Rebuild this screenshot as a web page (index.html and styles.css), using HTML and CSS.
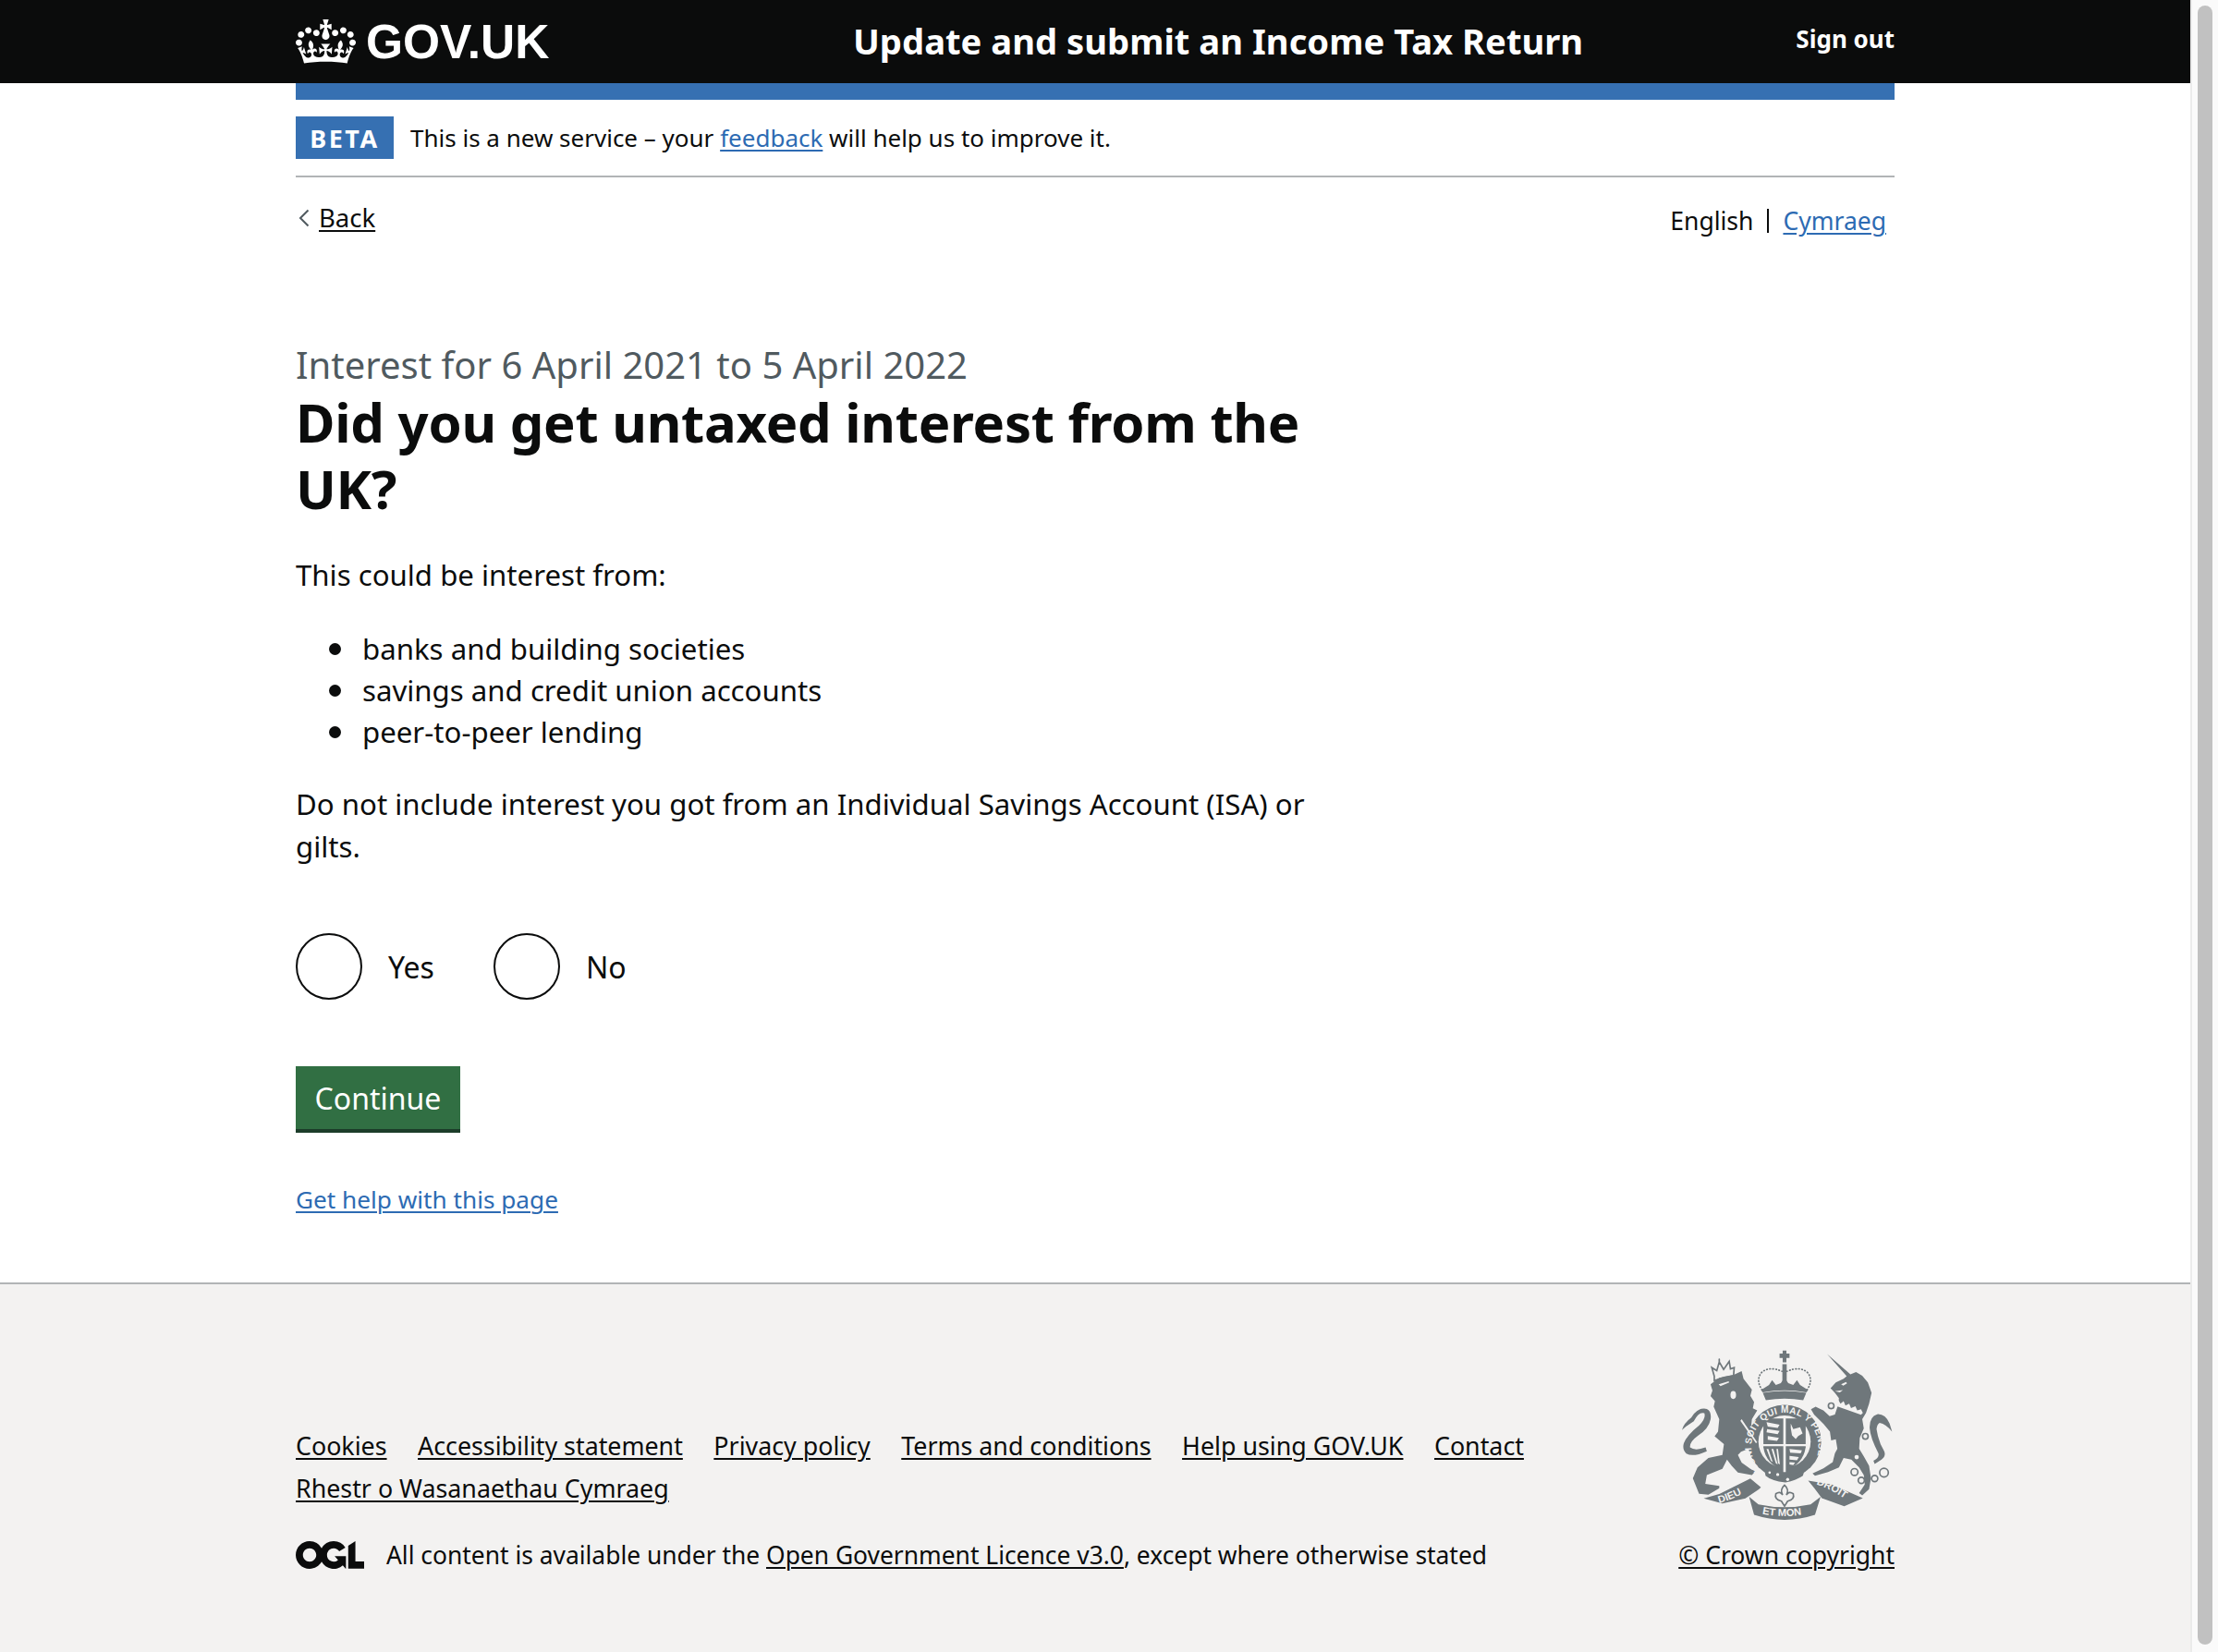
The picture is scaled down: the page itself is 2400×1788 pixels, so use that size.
FILE: index.html
```html
<!DOCTYPE html>
<html lang="en">
	<head>
		<title>Did you get untaxed interest from the UK?</title>
		<meta charset="UTF-8" />
		<link rel="stylesheet" href="styles.css">
	</head>
	<body>
		<div class="page">
			<header class="header">
				<div class="container headerInner">
					<a class="logo" href="#">
						<svg class="crown" viewBox="0 0 132 97" aria-hidden="true"><path fill="currentColor" fill-rule="evenodd" d="M25 30.2c3.5 1.5 7.7-.2 9.1-3.7 1.5-3.6-.2-7.8-3.9-9.2-3.6-1.4-7.6.3-9.1 3.9-1.4 3.5.3 7.5 3.9 9zM9 39.5c3.6 1.5 7.8-.2 9.2-3.7 1.5-3.6-.2-7.8-3.9-9.1-3.6-1.5-7.6.2-9.1 3.8-1.4 3.5.3 7.5 3.8 9zM4.4 57.2c3.5 1.5 7.7-.2 9.1-3.8 1.5-3.6-.2-7.7-3.9-9.1-3.5-1.5-7.6.3-9.1 3.8-1.4 3.5.3 7.6 3.9 9.1zm38.3-21.4c3.5 1.5 7.7-.2 9.1-3.8 1.5-3.6-.2-7.7-3.9-9.1-3.6-1.5-7.6.3-9.1 3.8-1.3 3.6.4 7.7 3.9 9.1zm64.4-5.6c-3.6 1.5-7.8-.2-9.1-3.7-1.5-3.6.2-7.8 3.8-9.2 3.6-1.4 7.7.3 9.2 3.9 1.3 3.5-.4 7.5-3.9 9zm15.9 9.3c-3.6 1.5-7.7-.2-9.1-3.7-1.5-3.6.2-7.8 3.7-9.1 3.6-1.5 7.7.2 9.2 3.8 1.5 3.5-.3 7.5-3.8 9zm4.7 17.7c-3.6 1.5-7.8-.2-9.2-3.8-1.5-3.6.2-7.7 3.9-9.1 3.6-1.5 7.7.3 9.2 3.8 1.3 3.5-.4 7.6-3.9 9.1zM89.3 35.8c-3.6 1.5-7.8-.2-9.2-3.8-1.4-3.6.2-7.7 3.9-9.1 3.6-1.5 7.7.3 9.2 3.8 1.4 3.6-.3 7.7-3.9 9.1zM69.7 17.7l8.9 4.7V9.3l-8.9 2.8c-.2-.3-.5-.6-.9-.9L72.4 0H59.6l3.5 11.2c-.3.3-.6.5-.9.9l-8.8-2.8v13.1l8.8-4.7c.3.3.6.7.9.9l-5 15.4v.1c-.2.8-.4 1.6-.4 2.4 0 4.1 3.1 7.5 7 8.1h.2c.3 0 .7.1 1 .1.4 0 .7 0 1-.1h.2c4-.6 7.1-4.1 7.1-8.1 0-.8-.1-1.7-.4-2.4V34l-5.1-15.4c.4-.2.7-.6 1-.9zM66 92.8c16.9 0 32.8 1.1 47.1 3.2 4-16.9 8.9-26.7 14-33.5l-9.6-3.4c1 4.9 1.1 7.2 0 10.2-1.5-1.4-3-4.3-4.2-8.7L108.6 76c2.8-2 5-3.2 7.5-3.3-4.4 9.4-10 11.9-13.6 11.2-4.3-.8-6.3-4.6-5.6-7.9 1-4.7 5.7-5.9 8-.5 4.3-8.7-3-11.4-7.6-8.8 7.1-7.2 7.9-13.5 2.1-21.1-8 6.1-8.1 12.3-4.5 20.8-4.7-5.4-12.1-2.5-9.5 6.2 3.4-5.2 7.9-2 7.2 3.1-.6 4.3-6.4 7.8-13.5 7.2-10.3-.9-10.9-8-11.2-13.8 2.5-.5 7.1 1.8 11 7.3L80.2 60c-4.1 4.4-8 5.3-12.3 5.4 1.4-4.4 8-11.6 8-11.6H55.5s6.4 7.2 7.9 11.6c-4.2-.1-8-1-12.3-5.4l1.4 16.4c3.9-5.5 8.5-7.7 10.9-7.3-.3 5.8-.9 12.8-11.1 13.8-7.2.6-12.9-2.9-13.5-7.2-.7-5 3.8-8.3 7.1-3.1 2.7-8.7-4.6-11.6-9.4-6.2 3.7-8.5 3.6-14.7-4.6-20.8-5.8 7.6-5 13.9 2.2 21.1-4.7-2.6-11.9.1-7.7 8.8 2.3-5.5 7.1-4.2 8.1.5.7 3.3-1.3 7.1-5.7 7.9-3.5.7-9-1.8-13.5-11.2 2.5.1 4.7 1.3 7.5 3.3l-4.7-15.4c-1.2 4.4-2.7 7.2-4.3 8.7-1.1-3-.9-5.3 0-10.2l-9.5 3.4c5 6.9 9.9 16.7 14 33.5 14.8-2.1 30.8-3.2 47.7-3.2z"/></svg>
						<span class="logoText">GOV.UK</span>
					</a>
					<a class="serviceName" href="#">Update and submit an Income Tax Return</a>
					<a class="signOut" href="#">Sign out</a>
				</div>
			</header>
			<div class="container">
				<div class="blueBar"></div>
				<div class="phase">
					<strong class="phaseTag">BETA</strong>
					<span>This is a new service – your <a class="link" href="#">feedback</a> will help us to improve it.</span>
				</div>
				<div class="subNav">
					<a class="back" href="#"><svg class="chevron" viewBox="0 0 12 20" aria-hidden="true"><path d="M10.5 1.5 2 10l8.5 8.5" fill="none" stroke="#505a5f" stroke-width="2"/></svg><span>Back</span></a>
					<div class="language">
						<span>English</span><span class="langBar"></span><a class="link" href="#">Cymraeg</a>
					</div>
				</div>
				<main class="main">
					<span class="caption">Interest for 6 April 2021 to 5 April 2022</span>
					<h1 class="heading">Did you get untaxed interest from the UK?</h1>
					<p class="para">This could be interest from:</p>
					<ul class="bullets">
						<li>banks and building societies</li>
						<li>savings and credit union accounts</li>
						<li>peer-to-peer lending</li>
					</ul>
					<p class="para">Do not include interest you got from an Individual Savings Account (ISA) or gilts.</p>
					<div class="radios">
						<label class="radio"><span class="radioCircle"></span>Yes</label>
						<label class="radio"><span class="radioCircle"></span>No</label>
					</div>
					<button class="button" type="button">Continue</button>
					<a class="link helpLink" href="#">Get help with this page</a>
				</main>
			</div>
			<footer class="footer">
				<div class="container footerInner">
					<div class="footerLeft">
						<ul class="footerLinks">
							<li><a href="#">Cookies</a></li>
							<li><a href="#">Accessibility statement</a></li>
							<li><a href="#">Privacy policy</a></li>
							<li><a href="#">Terms and conditions</a></li>
							<li><a href="#">Help using GOV.UK</a></li>
							<li><a href="#">Contact</a></li>
							<li><a href="#">Rhestr o Wasanaethau Cymraeg</a></li>
						</ul>
						<div class="licence">
							<svg class="ogl" viewBox="0 0 483.2 195.7" aria-hidden="true"><path fill="currentColor" d="M421.5 142.8V.1l-50.7 32.3v161.1h112.4v-50.7zm-122.3-9.6A47.12 47.12 0 0 1 221 97.8c0-26 21.1-47.1 47.1-47.1 16.7 0 31.4 8.7 39.7 21.8l42.7-27.2A97.63 97.63 0 0 0 268.1 0c-36.5 0-68.3 20.1-85.1 49.7A98 98 0 0 0 97.8 0C43.9 0 0 43.9 0 97.8s43.9 97.8 97.8 97.8c36.5 0 68.3-20.1 85.1-49.7a97.76 97.76 0 0 0 149.6 25.4l19.4 22.2h3v-87.8h-80l24.3 27.5zM97.8 145c-26 0-47.1-21.1-47.1-47.1s21.1-47.1 47.1-47.1 47.2 21 47.2 47S123.8 145 97.8 145"/></svg>
							<span>All content is available under the <a href="#">Open Government Licence v3.0</a>, except where otherwise stated</span>
						</div>
					</div>
					<div class="copyright">
						<svg class="crest" viewBox="118 64 682 556" aria-hidden="true">
							<defs>
								<path id="garterPath" d="M372 452A108 108 0 1 1 530 452" fill="none"/>
								<path id="dieuPath" d="M240 560Q295 545 352 507" fill="none"/>
								<path id="monPath" d="M366 592Q450 612 534 592" fill="none"/>
								<path id="droitPath" d="M552 500Q610 518 668 564" fill="none"/>
							</defs>
							<g class="crestFill">
								<!-- royal crown -->
								<path d="M444 69h12v10h10v-6h0v26h0v-6h-10v14h-12V93h-10v6h0V73h0v6h10z"/>
								<path d="M443 113h14v62h-14z"/>
								<path d="M380 204l-6-8 26-16 10-16 12 16 16-6 12-18 12 18 16 6 12-16 10 16 26 16-6 8q-70-14-140 0z"/>
								<path d="M380 205q70-12 140 0l-10 24q-60-10-120 0z"/>
								<path class="crestCut" d="M388 232q62-10 124 0l-6 16q-56-8-112 0z"/>
								<!-- lion -->
								<path d="M212 178L240 157L285 148L312 135L318 160L345 195L340 215L352 235L348 255L362 262L345 290L340 340L362 372L355 388L335 385L310 395L300 405L312 430L340 450L356 458L345 470L300 462L280 440L265 420L250 450L200 470L195 498L240 505L240 512L205 533L175 530L155 480L170 445L205 415L250 405L255 370L225 345L236 330L240 290L222 250L226 232L212 216L218 198z"/>
								<path d="M120 325q6-22 30-40 20-34 50-28 16 8 12 34-6 30-40 52-28 20-26 38 16 12 50 0l4 12q-44 20-66 8-14-14-8-34 10-26 50-58 22-22 16-38-18-6-34 26l-10 6q-14 8-28 22z"/>
								<!-- unicorn -->
								<path d="M587 80L662 146L680 138L700 150L718 172L730 205L722 240L712 270L700 290L705 320L692 350L690 385L705 410L722 440L728 480L722 515L700 535L690 528L708 500L705 470L690 445L665 420L640 415L625 445L590 460L548 472L540 465L575 448L605 428L612 400L620 385L615 355L600 358L596 330L575 305L545 275L535 258L550 250L575 262L595 280L612 275L622 245L625 222L612 205L598 190L615 172L640 160L650 152z"/>
								<path d="M796 330q-20-24-40-28-8 4-10 20 6 40 24 70 8 16-8 28l-22 14-4-10q20-10 16-24-26-50-28-80-2-38 24-46 26-2 40 30z"/>
								<!-- garter -->
								<circle cx="450" cy="362" r="118"/>
								<circle class="crestCut" cx="450" cy="362" r="84"/>
								<path d="M382 288h136v92q-8 56-68 76-60-20-68-76z"/>
								<path class="crestCut" d="M446 284h8v176h-8zM370 370h160v7H370z"/>
								<path class="crestCut" d="M392 300l42 8-6 10-32-4zM394 322l40 6-6 10-36-6zM396 344l36 6-6 10-30-4zM470 304l8 18 22-6 8 20-14 8-8 10-12-12-4-24z"/>
								<path class="crestCut" d="M392 386l6 0 14 42-6-4zM408 386l6 0 14 50-6-4zM424 386l5 0 6 50-6-4z"/>
								<path class="crestCut" d="M466 386l40 4-4 10-34-2zM466 408l30 4-6 10-24-2zM466 428l18 2-6 8-12-2z"/>
								<path d="M385 452q65 36 130 0l-6 20q-20 14-56 22-46-6-64-22z"/>
								<circle class="crestCut" cx="428" cy="468" r="5"/>
								<circle class="crestCut" cx="460" cy="484" r="5"/>
								<circle class="crestCut" cx="402" cy="462" r="4"/>
							</g>
							<g class="crestLine">
								<!-- crown arches -->
								<path stroke-dasharray="2 8" d="M378 196q-22-32-2-56 24-22 66-4M522 196q22-32 2-56-24-22-66-4"/>
								<!-- lion's crown -->
								<path d="M224 152l-8-28 16 10 8-28 14 24 18-26 4 24 12-4-2 26q-32 4-62 16zM240 97v8"/>
								<!-- unicorn's chain -->
								<circle cx="600" cy="247" r="9"/>
								<circle cx="710" cy="345" r="9"/>
								<circle cx="675" cy="460" r="11"/>
								<circle cx="697" cy="487" r="10"/>
								<circle cx="740" cy="481" r="10"/>
								<circle cx="770" cy="462" r="14"/>
								<!-- fleur de lis -->
								<path d="M450 502q16 14 6 32 8-14 22-4 6 18-18 24l-10 16-10-16q-24-6-18-24 14-10 22 4-10-18 6-32z"/>
							</g>
							<g class="crestCuts">
								<!-- collar, claw stripe, faces and spots -->
								<path d="M622 226l8 14 10-8 6 14 12-6 6 14 14-6 6 14 12-4 6 12-6 6-84-30z"/>
								<path d="M312 290l50 74-4 3-50-72z"/>
								<circle cx="682" cy="412" r="7"/>
								<circle cx="702" cy="384" r="7"/>
								<path d="M238 178L270 168L272 172L244 184z"/>
								<ellipse cx="285" cy="212" rx="9" ry="13"/>
								<path d="M632 178l16-8 3 5-12 7z"/>
								<path d="M612 200l26-4-10 8z"/>
							</g>
							<g class="crestFill">
								<path d="M190 545l50-14 100-50 34 28-6 6-44 30-74 16z"/>
								<path d="M336 540l30 24q84 18 168 0l32-24-18 58q-98 32-196 0z"/>
								<path d="M526 488l76 12 100 44-60 26-72-26-24-32z"/>
							</g>
							<g class="crestText">
								<text font-size="30" letter-spacing="1"><textPath href="#garterPath">HONI SOIT QUI MAL Y PENSE</textPath></text>
								<text font-size="33"><textPath href="#dieuPath">DIEU</textPath></text>
								<text font-size="33"><textPath href="#monPath" startOffset="12">ET MON</textPath></text>
								<text font-size="33"><textPath href="#droitPath">DROIT</textPath></text>
							</g>
						</svg>
						<a href="#">© Crown copyright</a>
					</div>
				</div>
			</footer>
		</div>
		<div class="scrollbar"><div class="scrollThumb"></div></div>
	</body>
</html>
```
FILE: styles.css
```css
html, body {
	margin: 0px;
	padding: 0px;
	height: 1788px;
	overflow: hidden;
}
body {
	display: flex;
	font-family: "Noto Sans", Arial, sans-serif;
	font-size: 31.2px;
	line-height: 45px;
	color: #0b0c0c;
	background: #ffffff;
}
.page {
	flex: 1;
	display: flex;
	flex-direction: column;
	min-width: 0;
}
.scrollbar {
	width: 16px;
	border-left: 2px solid #ebebeb;
	background: #fafafa;
	padding: 6px 6px 8px 6px;
}
.scrollThumb {
	height: 100%;
	border-radius: 8px;
	background: #c1c1c1;
}
.container {
	width: 1730px;
	margin: 0 auto;
}
a {
	color: inherit;
	text-decoration-thickness: 2px;
	text-underline-offset: 3px;
}
.link {
	color: #2d6bb3;
}

/* header */
.header {
	height: 90px;
	background: #0b0c0c;
	color: #ffffff;
}
.headerInner {
	display: flex;
	align-items: center;
	height: 100%;
}
.header a {
	text-decoration: none;
}
.logo {
	display: flex;
	align-items: center;
	width: 603px;
}
.crown {
	width: 65px;
	height: 48px;
	margin-right: 11px;
}
.logoText {
	font-family: "Liberation Sans", Arial, sans-serif;
	font-weight: 700;
	font-size: 51.5px;
	line-height: 60px;
}
.serviceName {
	font-weight: 700;
	font-size: 38.2px;
	line-height: 50px;
	margin-top: -2px;
}
.signOut {
	margin-left: auto;
	font-weight: 700;
	font-size: 26px;
	margin-top: -6px;
}

/* beta banner */
.blueBar {
	height: 18px;
	background: #3670b2;
}
.phase {
	display: flex;
	align-items: center;
	height: 82px;
	border-bottom: 2px solid #b1b4b6;
	font-size: 26px;
	line-height: 40px;
}
.phaseTag {
	width: 106px;
	height: 46px;
	margin-right: 18px;
	background: #3670b2;
	color: #ffffff;
	font-weight: 700;
	font-size: 27px;
	line-height: 48px;
	letter-spacing: 2.5px;
	text-align: center;
}
.subNav {
	display: flex;
	justify-content: space-between;
	font-size: 26.5px;
	line-height: 40px;
	padding-top: 24px;
}
.back {
	display: flex;
	align-items: center;
	height: 40px;
	font-size: 27.5px;
}
.chevron {
	width: 12px;
	height: 20px;
	margin: 0 10px 0 3px;
}
.language {
	display: flex;
	align-items: center;
	height: 40px;
	margin: 3px 9px 0 0;
}
.langBar {
	width: 2px;
	height: 26px;
	margin: 0 15px;
	background: #0b0c0c;
}

/* main */
.main {
	display: block;
	width: 1130px;
	padding-top: 110px;
}
.caption {
	display: block;
	font-size: 40px;
	line-height: 52px;
	color: #505a5f;
}
.heading {
	margin: 0 0 34px 0;
	font-size: 58px;
	line-height: 72px;
	font-weight: 700;
	letter-spacing: -0.25px;
}
.para {
	margin: 0 0 35px 0;
	line-height: 46px;
}
.bullets {
	margin: 0 0 32px 0;
	padding: 0 0 0 36px;
	list-style: none;
}
.bullets li {
	display: flex;
	align-items: center;
	gap: 23px;
}
.bullets li::before {
	content: "";
	width: 13px;
	height: 13px;
	border-radius: 50%;
	background: #0b0c0c;
}
.radios {
	display: flex;
	gap: 64px;
	margin: 71px 0 72px 0;
}
.radio {
	display: flex;
	align-items: center;
	gap: 28px;
	font-size: 32px;
}
.radioCircle {
	width: 68px;
	height: 68px;
	border: 2px solid #0b0c0c;
	border-radius: 50%;
	background: #ffffff;
}
.button {
	display: block;
	height: 72px;
	width: 178px;
	padding: 0;
	border: 0;
	border-bottom: 4px solid #1c3d2a;
	background: #316f43;
	color: #ffffff;
	font-family: inherit;
	font-size: 32px;
}
.helpLink {
	display: block;
	margin-top: 52px;
	font-size: 26.2px;
	line-height: 40px;
}

/* footer */
.footer {
	flex: 1;
	margin-top: 70px;
	border-top: 2px solid #b1b4b6;
	background: #f3f2f1;
}
.footerInner {
	display: flex;
	justify-content: space-between;
	padding-top: 72px;
}
.footerLeft {
	padding-top: 80px;
	width: 1400px;
}
.footerLinks {
	display: flex;
	flex-wrap: wrap;
	gap: 0 33.5px;
	margin: 0 0 29px 0;
	padding: 0;
	list-style: none;
	font-size: 26.8px;
	line-height: 46px;
}
.licence {
	display: flex;
	align-items: center;
	gap: 24px;
	font-size: 26.4px;
	line-height: 40px;
}
.ogl {
	width: 74px;
	height: 30px;
	flex-shrink: 0;
}
.copyright {
	display: flex;
	flex-direction: column;
	align-items: flex-end;
	font-size: 26.5px;
	line-height: 40px;
}
.crest {
	width: 230px;
	height: 187px;
	margin: -2px 1px 16px 0;
}
.crestFill {
	fill: #6f777b;
}
.crestCut, .crestCuts {
	fill: #f3f2f1;
}
.crestLine {
	fill: none;
	stroke: #6f777b;
	stroke-width: 5;
	stroke-linecap: round;
}
.crestText {
	font-family: "Liberation Sans", Arial, sans-serif;
	font-weight: 700;
	fill: #f3f2f1;
}
```
